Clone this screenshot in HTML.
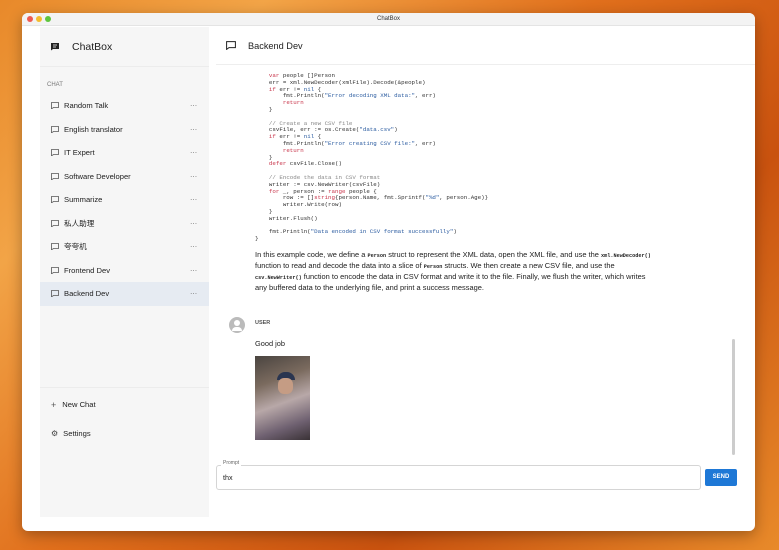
<!DOCTYPE html>
<html><head><meta charset="utf-8"><style>
*{margin:0;padding:0;box-sizing:border-box}
body{width:779px;height:550px;overflow:hidden;font-family:"Liberation Sans","Noto Sans CJK SC",sans-serif;position:relative;
background:linear-gradient(135deg,#e8892a 0%,#f2a447 20%,#e06f1c 45%,#c9520f 70%,#e88a2a 100%)}
.win{position:absolute;left:22px;top:13px;width:733px;height:518px;background:#fff;border-radius:6px;overflow:hidden;box-shadow:0 4px 14px rgba(0,0,0,.3)}
.tb{height:13px;background:#f3f3f3;position:relative;font-size:6px;color:#333;text-align:center;line-height:13px;border-bottom:1px solid #e4e4e4}
.dot{position:absolute;top:3px;width:6px;height:6px;border-radius:50%}
.side{position:absolute;left:18px;top:14px;width:169px;height:490px;background:#f6f6f6}
.logo{height:40px;display:flex;align-items:center;padding-left:10px;font-size:10.5px;color:#222;border-bottom:1px solid #ececec}
.lbl{font-size:6px;color:#777;margin:15px 0 0 7px}
.item{height:23.5px;display:flex;align-items:center;font-size:7.6px;color:#222;padding-left:11px;position:relative}
.item.sel{background:#e6ebf2}
.item svg{margin-right:5px}
.item .m{position:absolute;right:12px;top:0;line-height:23.5px;font-size:8px;color:#777;letter-spacing:-.3px}
.bot{position:absolute;top:360px;left:0;width:169px;border-top:1px solid #ececec}
.bi{height:29px;display:flex;align-items:center;font-size:7.6px;color:#222;padding-left:11px}
.hdr{position:absolute;left:194px;top:14px;right:0;height:38px;border-bottom:1px solid #eee;display:flex;align-items:center;padding-left:10px;font-size:9.2px;color:#222}
pre{position:absolute;left:233px;top:60px;font-family:"Liberation Mono",monospace;font-size:5.8px;line-height:6.8px;color:#333}
.k{color:#c8344a}.s{color:#2a5ba0}.c{color:#888}
.p{position:absolute;left:233px;top:237px;font-size:7.45px;line-height:10px;color:#222}
.p code{font-family:"Liberation Mono",monospace;font-size:5.2px;font-weight:bold}
.sb{position:absolute;left:710px;top:326px;width:3px;height:116px;background:#ccc;border-radius:2px}
</style></head><body>
<div class="win">
<div class="tb"><span class="dot" style="left:5px;background:#ee5a52"></span><span class="dot" style="left:14px;background:#f4bd2f"></span><span class="dot" style="left:23px;background:#5ec53d"></span>ChatBox</div>
<div class="side">
<div class="logo"><svg width="10" height="9" viewBox="0 0 10 9" style="margin-right:12px"><path d="M1 1h8v6H3L1 8.5z" fill="#222"/><path d="M3 3h4M3 5h3" stroke="#fff" stroke-width=".8"/></svg>ChatBox</div>
<div class="lbl">CHAT</div>
<div style="margin-top:6px">
<div class="item"><svg width="8" height="7"><path d="M.5.5h7v5h-5L.5 6.8z" fill="none" stroke="#555" stroke-width=".8"/></svg>Random Talk<span class="m">···</span></div>
<div class="item"><svg width="8" height="7"><path d="M.5.5h7v5h-5L.5 6.8z" fill="none" stroke="#555" stroke-width=".8"/></svg>English translator<span class="m">···</span></div>
<div class="item"><svg width="8" height="7"><path d="M.5.5h7v5h-5L.5 6.8z" fill="none" stroke="#555" stroke-width=".8"/></svg>IT Expert<span class="m">···</span></div>
<div class="item"><svg width="8" height="7"><path d="M.5.5h7v5h-5L.5 6.8z" fill="none" stroke="#555" stroke-width=".8"/></svg>Software Developer<span class="m">···</span></div>
<div class="item"><svg width="8" height="7"><path d="M.5.5h7v5h-5L.5 6.8z" fill="none" stroke="#555" stroke-width=".8"/></svg>Summarize<span class="m">···</span></div>
<div class="item"><svg width="8" height="7"><path d="M.5.5h7v5h-5L.5 6.8z" fill="none" stroke="#555" stroke-width=".8"/></svg>私人助理<span class="m">···</span></div>
<div class="item"><svg width="8" height="7"><path d="M.5.5h7v5h-5L.5 6.8z" fill="none" stroke="#555" stroke-width=".8"/></svg>夸夸机<span class="m">···</span></div>
<div class="item"><svg width="8" height="7"><path d="M.5.5h7v5h-5L.5 6.8z" fill="none" stroke="#555" stroke-width=".8"/></svg>Frontend Dev<span class="m">···</span></div>
<div class="item sel"><svg width="8" height="7"><path d="M.5.5h7v5h-5L.5 6.8z" fill="none" stroke="#555" stroke-width=".8"/></svg>Backend Dev<span class="m">···</span></div>
</div>
<div class="bot">
<div class="bi" style="margin-top:2px"><span style="margin-right:6px;color:#555;font-size:9px">+</span>New Chat</div>
<div class="bi"><span style="margin-right:5px;color:#444;font-size:8px">⚙</span>Settings</div>
</div>
</div>
<div class="hdr"><svg width="10" height="9" style="margin-right:12px"><path d="M.6.6h8.8v6H3L.6 8.4z" fill="none" stroke="#222" stroke-width="1"/></svg>Backend Dev</div>
<pre>    <span class="k">var</span> people []Person
    err = xml.NewDecoder(xmlFile).Decode(&amp;people)
    <span class="k">if</span> err != <span class="s">nil</span> {
        fmt.Println(<span class="s">"Error decoding XML data:"</span>, err)
        <span class="k">return</span>
    }

    <span class="c">// Create a new CSV file</span>
    csvFile, err := os.Create(<span class="s">"data.csv"</span>)
    <span class="k">if</span> err != <span class="s">nil</span> {
        fmt.Println(<span class="s">"Error creating CSV file:"</span>, err)
        <span class="k">return</span>
    }
    <span class="k">defer</span> csvFile.Close()

    <span class="c">// Encode the data in CSV format</span>
    writer := csv.NewWriter(csvFile)
    <span class="k">for</span> _, person := <span class="k">range</span> people {
        row := []<span class="k">string</span>{person.Name, fmt.Sprintf(<span class="s">"%d"</span>, person.Age)}
        writer.Write(row)
    }
    writer.Flush()

    fmt.Println(<span class="s">"Data encoded in CSV format successfully"</span>)
}</pre>
<div class="p" style="white-space:nowrap">In this example code, we define a <code>Person</code> struct to represent the XML data, open the XML file, and use the <code>xml.NewDecoder()</code><br>function to read and decode the data into a slice of <code>Person</code> structs. We then create a new CSV file, and use the<br><code>csv.NewWriter()</code> function to encode the data in CSV format and write it to the file. Finally, we flush the writer, which writes<br>any buffered data to the underlying file, and print a success message.</div>
<div style="position:absolute;left:207px;top:304px;width:16px;height:16px;border-radius:50%;background:#bbb"><div style="position:absolute;left:5px;top:3px;width:6px;height:6px;border-radius:50%;background:#fff"></div><div style="position:absolute;left:3px;top:10px;width:10px;height:4px;border-radius:5px 5px 0 0;background:#fff"></div></div>
<div style="position:absolute;left:233px;top:307px;font-size:5.5px;font-weight:bold;color:#555">USER</div>
<div style="position:absolute;left:233px;top:326px;font-size:7.4px;color:#222">Good job</div>
<div style="position:absolute;left:233px;top:343px;width:55px;height:84px;background:linear-gradient(160deg,#4a4440 0%,#7a6a5e 30%,#b8a8a8 55%,#6e6070 80%,#3a3236 100%)"><div style="position:absolute;left:22px;top:16px;width:18px;height:8px;background:#2a3550;border-radius:8px 8px 0 0"></div><div style="position:absolute;left:23px;top:22px;width:15px;height:16px;background:#c59c84;border-radius:40%"></div></div>
<div class="sb"></div>
<div style="position:absolute;left:194px;top:452px;width:485px;height:25px;border:1px solid #d5d5d5;border-radius:3px"></div>
<div style="position:absolute;left:199px;top:447px;font-size:5px;color:#666;background:#fff;padding:0 2px">Prompt</div>
<div style="position:absolute;left:201px;top:460px;font-size:7.2px;color:#222">thx</div>
<div style="position:absolute;left:683px;top:456px;width:32px;height:17px;background:#1e78d6;color:#fff;font-size:6px;font-weight:bold;text-align:center;line-height:17px;border-radius:2px">SEND</div>
</div>
</body></html>
